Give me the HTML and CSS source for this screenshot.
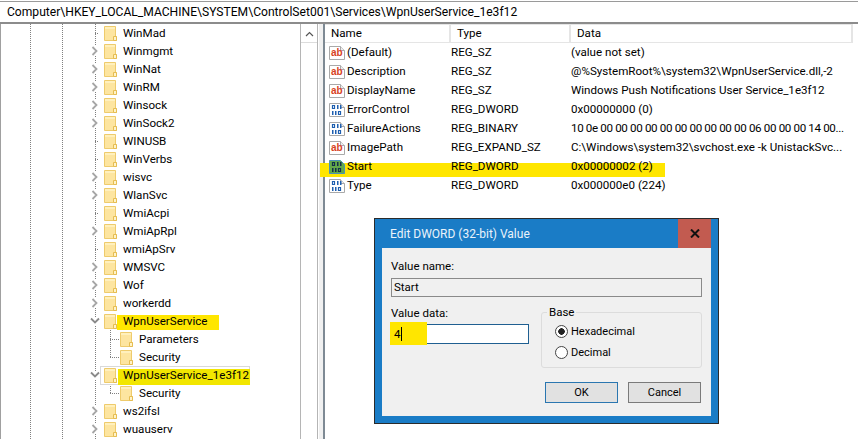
FILE: index.html
```html
<!DOCTYPE html>
<html lang="en">
<head>
    <meta charset="UTF-8">
    <title>Registry Editor</title>
    <link rel="stylesheet" href="styles.css">
</head>
<body>
    <svg class="defs" width="0" height="0">
        <symbol id="folder" viewBox="0 0 13 15">
            <path d="M.5.5h11v10h1v4H.5z" fill="#fde5a0" stroke="#eecb6c"/>
            <path d="M1 1h10v2H1z" fill="#fff0bd"/>
            <path d="M9.500 14.500v-4h3v4z" fill="#fff3c8" stroke="#e6bd52"/>
        </symbol>
        <symbol id="arrow-right" viewBox="0 0 8 10">
            <path d="M1.500 1l4 4-4 4" fill="none" stroke="#a6a6a6" stroke-width="1.800"/>
        </symbol>
        <symbol id="arrow-down" viewBox="0 0 10 8">
            <path d="M1 1.500l4 4 4-4" fill="none" stroke="#8a8a8a" stroke-width="1.800"/>
        </symbol>
        <symbol id="page" viewBox="0 0 16 16">
            <path d="M.5 1.500h11l4 4v9H.5z" fill="#fff" stroke="#a9a9a9"/>
            <path d="M11.500 1.500v4h4" fill="#eee" stroke="#a9a9a9"/>
        </symbol>
        <symbol id="bits" viewBox="0 0 16 16">
            <path d="M3.500 3.500h2v3h-2zM9.500 9.500h2v3h-2z" fill="none" stroke="currentColor" stroke-width="1.200"/>
            <path d="M8 3h1.500v4H8zM11 3h1.500v4H11zM3 9h1.500v4H3zM6 9h1.500v4H6z" fill="currentColor"/>
        </symbol>
    </svg>

    <div class="address">Computer\HKEY_LOCAL_MACHINE\SYSTEM\ControlSet001\Services\WpnUserService_1e3f12</div>

    <div class="main">
        <div class="tree">
            <div class="node"><span class="leaf"></span><svg class="folder"><use href="#folder"/></svg><span>WinMad</span></div>
            <div class="node"><svg class="arrow"><use href="#arrow-right"/></svg><svg class="folder"><use href="#folder"/></svg><span>Winmgmt</span></div>
            <div class="node"><svg class="arrow"><use href="#arrow-right"/></svg><svg class="folder"><use href="#folder"/></svg><span>WinNat</span></div>
            <div class="node"><svg class="arrow"><use href="#arrow-right"/></svg><svg class="folder"><use href="#folder"/></svg><span>WinRM</span></div>
            <div class="node"><svg class="arrow"><use href="#arrow-right"/></svg><svg class="folder"><use href="#folder"/></svg><span>Winsock</span></div>
            <div class="node"><svg class="arrow"><use href="#arrow-right"/></svg><svg class="folder"><use href="#folder"/></svg><span>WinSock2</span></div>
            <div class="node"><span class="leaf"></span><svg class="folder"><use href="#folder"/></svg><span>WINUSB</span></div>
            <div class="node"><span class="leaf"></span><svg class="folder"><use href="#folder"/></svg><span>WinVerbs</span></div>
            <div class="node"><svg class="arrow"><use href="#arrow-right"/></svg><svg class="folder"><use href="#folder"/></svg><span>wisvc</span></div>
            <div class="node"><svg class="arrow"><use href="#arrow-right"/></svg><svg class="folder"><use href="#folder"/></svg><span>WlanSvc</span></div>
            <div class="node"><span class="leaf"></span><svg class="folder"><use href="#folder"/></svg><span>WmiAcpi</span></div>
            <div class="node"><svg class="arrow"><use href="#arrow-right"/></svg><svg class="folder"><use href="#folder"/></svg><span>WmiApRpl</span></div>
            <div class="node"><span class="leaf"></span><svg class="folder"><use href="#folder"/></svg><span>wmiApSrv</span></div>
            <div class="node"><svg class="arrow"><use href="#arrow-right"/></svg><svg class="folder"><use href="#folder"/></svg><span>WMSVC</span></div>
            <div class="node"><svg class="arrow"><use href="#arrow-right"/></svg><svg class="folder"><use href="#folder"/></svg><span>Wof</span></div>
            <div class="node"><svg class="arrow"><use href="#arrow-right"/></svg><svg class="folder"><use href="#folder"/></svg><span>workerdd</span></div>
            <div class="node"><svg class="arrow down"><use href="#arrow-down"/></svg><svg class="folder"><use href="#folder"/></svg><span class="marked">WpnUserService</span></div>
            <div class="node child"><svg class="folder"><use href="#folder"/></svg><span>Parameters</span></div>
            <div class="node child last"><svg class="folder"><use href="#folder"/></svg><span>Security</span></div>
            <div class="node"><svg class="arrow down flush"><use href="#arrow-down"/></svg><div class="sel-box"><svg class="folder"><use href="#folder"/></svg><span class="marked marked-sel">WpnUserService_1e3f12</span></div></div>
            <div class="node child last"><svg class="folder"><use href="#folder"/></svg><span>Security</span></div>
            <div class="node"><svg class="arrow"><use href="#arrow-right"/></svg><svg class="folder"><use href="#folder"/></svg><span>ws2ifsl</span></div>
            <div class="node"><svg class="arrow"><use href="#arrow-right"/></svg><svg class="folder"><use href="#folder"/></svg><span>wuauserv</span></div>
        </div>

        <div class="scrollbar">
            <div class="scroll-up"><svg width="9" height="6" viewBox="0 0 9 6"><path d="M1 5l3.500-3.500L8 5" fill="none" stroke="#555" stroke-width="1.200"/></svg></div>
        </div>
        <div class="splitter"></div>

        <div class="values">
            <div class="header">
                <div class="col-name">Name</div>
                <div class="col-type">Type</div>
                <div class="col-data">Data</div>
            </div>
            <div class="row"><svg class="reg-icon"><use href="#page"/><text x="2" y="11" class="icon-ab">ab</text></svg><div class="col-name">(Default)</div><div class="col-type">REG_SZ</div><div class="col-data">(value not set)</div></div>
            <div class="row"><svg class="reg-icon"><use href="#page"/><text x="2" y="11" class="icon-ab">ab</text></svg><div class="col-name">Description</div><div class="col-type">REG_SZ</div><div class="col-data">@%SystemRoot%\system32\WpnUserService.dll,-2</div></div>
            <div class="row"><svg class="reg-icon"><use href="#page"/><text x="2" y="11" class="icon-ab">ab</text></svg><div class="col-name">DisplayName</div><div class="col-type">REG_SZ</div><div class="col-data">Windows Push Notifications User Service_1e3f12</div></div>
            <div class="row"><svg class="reg-icon icon-num"><use href="#page"/><use href="#bits"/></svg><div class="col-name">ErrorControl</div><div class="col-type">REG_DWORD</div><div class="col-data">0x00000000 (0)</div></div>
            <div class="row"><svg class="reg-icon icon-num"><use href="#page"/><use href="#bits"/></svg><div class="col-name">FailureActions</div><div class="col-type">REG_BINARY</div><div class="col-data tight">10 0e 00 00 00 00 00 00 00 00 00 00 06 00 00 00 14 00...</div></div>
            <div class="row"><svg class="reg-icon"><use href="#page"/><text x="2" y="11" class="icon-ab">ab</text></svg><div class="col-name">ImagePath</div><div class="col-type">REG_EXPAND_SZ</div><div class="col-data">C:\Windows\system32\svchost.exe -k UnistackSvc...</div></div>
            <div class="row row-marked"><svg class="reg-icon icon-sel" viewBox="0 0 16 16"><path d="M.5 1.500h11l4 4v9H.5z" fill="#63a94a" stroke="#4b93b5"/><use href="#bits"/></svg><div class="col-name">Start</div><div class="col-type">REG_DWORD</div><div class="col-data">0x00000002 (2)</div></div>
            <div class="row"><svg class="reg-icon icon-num"><use href="#page"/><use href="#bits"/></svg><div class="col-name">Type</div><div class="col-type">REG_DWORD</div><div class="col-data">0x000000e0 (224)</div></div>
        </div>
    </div>

    <div class="dialog">
        <div class="dialog-title">
            <span>Edit DWORD (32-bit) Value</span>
            <div class="dialog-close"><svg width="10" height="9" viewBox="0 0 10 9"><path d="M1 .5l8 8M9 .5l-8 8" stroke="#111" stroke-width="2"/></svg></div>
        </div>
        <div class="dialog-body">
            <div class="field-label">Value name:</div>
            <div class="name-box">Start</div>
            <div class="dialog-columns">
                <div class="data-side">
                    <div class="field-label">Value data:</div>
                    <div class="data-box"><span class="data-mark"></span><span class="data-text">4</span></div>
                </div>
                <fieldset class="base">
                    <legend>Base</legend>
                    <div class="radio-row"><span class="radio checked"></span>Hexadecimal</div>
                    <div class="radio-row"><span class="radio"></span>Decimal</div>
                </fieldset>
            </div>
            <div class="dialog-buttons">
                <div class="btn btn-default">OK</div>
                <div class="btn">Cancel</div>
            </div>
        </div>
    </div>
</body>
</html>
```

FILE: styles.css
```css
html, body {
    margin: 0;
    height: 100%;
}
body {
    position: relative;
    width: 858px;
    height: 439px;
    overflow: hidden;
    background-color: #fff;
    font-family: Roboto, "Open Sans", sans-serif;
    font-size: 11.600px;
    color: #000;
}
.defs {
    position: absolute;
}
.icon-ab {
    font-family: "Liberation Sans", sans-serif;
    font-size: 10px;
    font-weight: bold;
    fill: #d8431f;
}

/* Address bar */
.address {
    box-sizing: border-box;
    height: 23px;
    margin-top: 1px;
    padding: 0 7px;
    font-size: 12.100px;
    line-height: 20px;
    border-top: 1px solid #9a9a9a;
    border-bottom: 2px solid #8c8c8c;
    white-space: nowrap;
}
.main {
    display: flex;
    height: 415px;
    border-left: 1px solid #a0a0a0;
}

/* Tree */
.tree {
    box-sizing: border-box;
    flex: none;
    width: 300px;
    border-right: 1px solid #b5b5b5;
    background-image:
        repeating-linear-gradient(to bottom, #808080 0 1px, transparent 1px 2px),
        repeating-linear-gradient(to bottom, #808080 0 1px, transparent 1px 2px),
        repeating-linear-gradient(to bottom, #808080 0 1px, transparent 1px 2px);
    background-size: 1px 100%;
    background-position: 29px 0, 61px 0, 94px 0;
    background-repeat: no-repeat;
}
.node {
    display: flex;
    align-items: center;
    height: 18px;
    margin-left: 89px;
    white-space: nowrap;
}
.arrow {
    flex: none;
    width: 8px;
    height: 10px;
    margin-left: 1px;
    margin-right: 5px;
    background-color: #fff;
}
.arrow.down {
    width: 10px;
    height: 8px;
    margin-left: 0;
    margin-right: 4px;
}
.arrow.flush {
    margin-right: 0;
}
.leaf {
    width: 9px;
    height: 1px;
    margin-right: 5px;
    background-image: repeating-linear-gradient(to right, #808080 0 1px, transparent 1px 2px);
    background-size: 7px 1px;
    background-position: 5px 0;
    background-repeat: no-repeat;
}
.folder {
    flex: none;
    width: 13px;
    height: 15px;
    margin-right: 6px;
}
.child {
    margin-left: 104px;
    padding-left: 15px;
    background-image:
        repeating-linear-gradient(to bottom, #808080 0 1px, transparent 1px 2px),
        repeating-linear-gradient(to right, #808080 0 1px, transparent 1px 2px);
    background-size: 1px 100%, 10px 1px;
    background-position: 5px 0, 5px 9px;
    background-repeat: no-repeat;
}
.child.last {
    background-size: 1px 9px, 10px 1px;
}
.sel-box {
    box-sizing: border-box;
    display: flex;
    align-items: center;
    width: 150px;
    height: 19px;
    padding-left: 3px;
    border: 1px solid #d9d9d9;
}
.marked {
    height: 15px;
    line-height: 12px;
    margin-top: 3px;
    margin-left: -6px;
    padding: 0 11px 0 6px;
    background-color: #ffe600;
}
.marked-sel {
    height: 16px;
    margin-left: -5px;
    padding: 0 1px 0 5px;
    background-color: #f2e600;
}

/* Scrollbar and splitter */
.scrollbar {
    box-sizing: border-box;
    flex: none;
    width: 17px;
    border-right: 1px solid #b5b5b5;
}
.scroll-up {
    display: flex;
    align-items: center;
    justify-content: center;
    height: 17px;
    margin-top: 1px;
    border-bottom: 1px solid #dcdcdc;
}
.splitter {
    flex: none;
    width: 4px;
    background-color: #f0f0f0;
    border-left: 1px solid #fff;
    border-right: 2px solid #7e8a94;
}

/* Value list */
.values {
    flex: 1;
    min-width: 0;
}
.header {
    display: flex;
    height: 17px;
    line-height: 17px;
    padding-left: 6px;
    margin-right: 5px;
    border-top: 1px solid #e5e5e5;
    border-bottom: 1px solid #e5e5e5;
}
.header .col-name {
    box-sizing: border-box;
    width: 120px;
    border-right: 2px solid #e5e5e5;
}
.header .col-type {
    box-sizing: border-box;
    width: 120px;
    padding-left: 6px;
    border-right: 2px solid #e5e5e5;
}
.header .col-data {
    flex: 1;
    padding-left: 6px;
    border-right: 2px solid #e5e5e5;
}
.row {
    position: relative;
    display: flex;
    align-items: center;
    height: 19px;
    padding-left: 4px;
    white-space: nowrap;
}
.row > div {
    padding-bottom: 1px;
}
.row .col-name {
    flex: none;
    width: 104px;
    margin-left: 2px;
}
.row .col-type {
    flex: none;
    width: 120px;
}
.row .col-data {
    flex: 1;
    min-width: 0;
}
.row .tight {
    letter-spacing: -0.350px;
}
.reg-icon {
    flex: none;
    width: 16px;
    height: 16px;
}
.icon-num {
    color: #1e5fb0;
}
.icon-sel {
    color: #12304a;
}

/* hand-drawn marker over the Start row */
.row-marked::before {
    content: "";
    position: absolute;
    left: -5px;
    top: 6px;
    width: 345px;
    height: 14px;
    background-color: #ffe600;
}
.row-marked > * {
    position: relative;
}

/* Edit DWORD dialog */
.dialog {
    position: absolute;
    left: 374px;
    top: 218px;
    width: 345px;
    height: 206px;
    box-sizing: border-box;
    display: flex;
    flex-direction: column;
    padding: 0 7px 7px;
    font-size: 12px;
    background-color: #1a7cc6;
    border: 1px solid #2b2b2b;
}
.dialog-title {
    flex: none;
    display: flex;
    justify-content: space-between;
    height: 29px;
    line-height: 29px;
    color: #eaf3fb;
}
.dialog-title span {
    margin-top: 1px;
    margin-left: 8px;
}
.dialog-close {
    display: flex;
    align-items: center;
    justify-content: center;
    width: 33px;
    background-color: #c25b50;
}
.dialog-body {
    flex: 1;
    box-sizing: border-box;
    padding: 10px 9px 0;
    font-size: 11.500px;
    background-color: #f0f0f0;
}
.field-label {
    line-height: 16px;
}
.name-box {
    box-sizing: border-box;
    height: 19px;
    margin-top: 4px;
    padding-left: 2px;
    line-height: 17px;
    border: 1px solid #8a8a8a;
}
.dialog-columns {
    display: flex;
    justify-content: space-between;
    margin-top: 8px;
}
.data-box {
    position: relative;
    box-sizing: border-box;
    width: 138px;
    height: 20px;
    margin-top: 3px;
    padding-left: 2px;
    line-height: 18px;
    border: 1px solid #1f5f91;
    background-color: #fff;
}
.data-text {
    position: relative;
    padding-right: 1px;
    border-right: 1px solid #000;
}
.data-mark {
    position: absolute;
    left: -2px;
    top: -3px;
    width: 37px;
    height: 23px;
    background-color: #ffe600;
}
.base {
    box-sizing: border-box;
    width: 161px;
    height: 63px;
    margin: 0;
    padding: 2px 0 0 13px;
    border: 1px solid #dcdcdc;
    border-radius: 3px;
}
.base legend {
    margin-left: -8px;
    padding: 0 2px;
    line-height: 14px;
}
.radio-row {
    display: flex;
    align-items: center;
    height: 21px;
    font-size: 11px;
}
.radio {
    box-sizing: border-box;
    width: 13px;
    height: 13px;
    margin-right: 3px;
    border: 1px solid #444;
    border-radius: 50%;
    background-color: #fff;
}
.radio.checked {
    background: radial-gradient(circle, #222 0 3px, #fff 3.500px);
}
.dialog-buttons {
    display: flex;
    justify-content: flex-end;
    gap: 10px;
    margin-top: 14px;
    margin-right: 1px;
}
.btn {
    box-sizing: border-box;
    width: 73px;
    height: 21px;
    font-size: 11px;
    text-align: center;
    line-height: 19px;
    background-color: #e1e1e1;
    border: 1px solid #7a7a7a;
}
.btn-default {
    border-color: #2a76b0;
}
```
